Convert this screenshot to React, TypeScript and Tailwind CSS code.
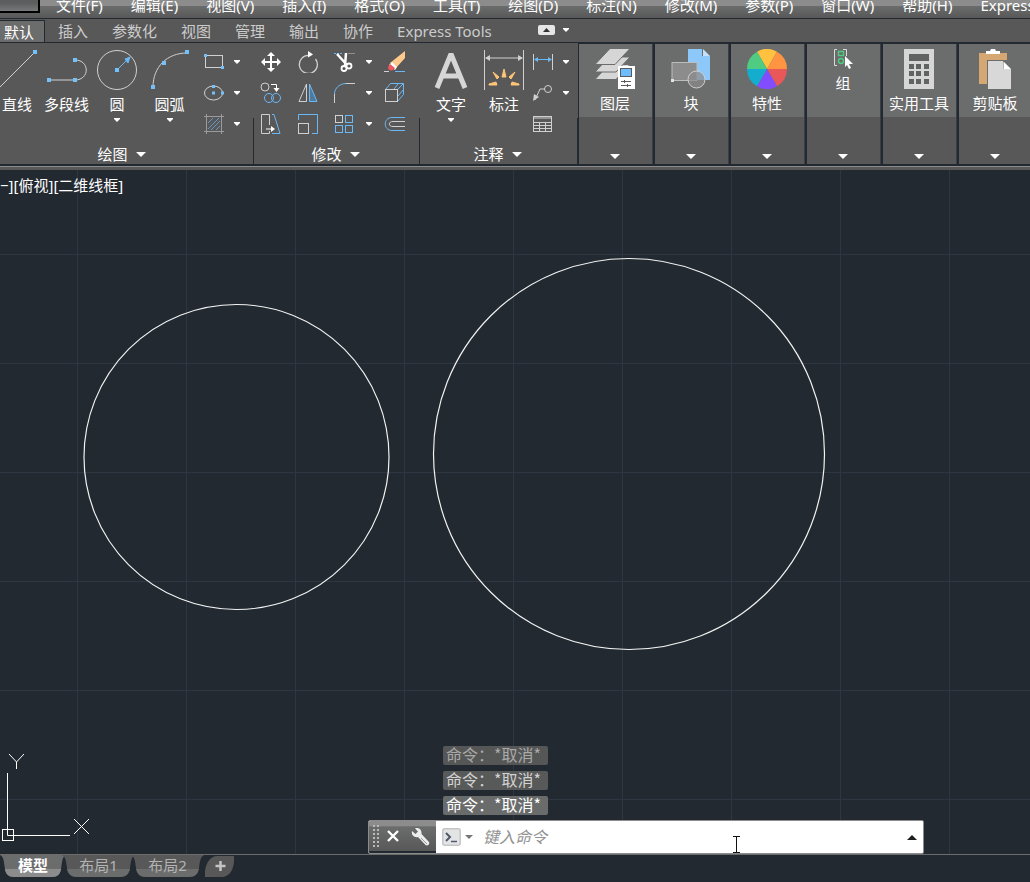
import { useState } from "react";
import type { ReactNode } from "react";
import clsx from "clsx";

const BLUE = "#6cb8f5";
const LINE = "#cfd0cf";

const menus = [
  "文件(F)", "编辑(E)", "视图(V)", "插入(I)", "格式(O)", "工具(T)", "绘图(D)",
  "标注(N)", "修改(M)", "参数(P)", "窗口(W)", "帮助(H)", "Express",
];

const ribbonTabs = ["默认", "插入", "参数化", "视图", "管理", "输出", "协作", "Express Tools"];

const history = [
  { text: "命令：*取消*", style: "bg-[#555656] text-[#a9a9a9]" },
  { text: "命令：*取消*", style: "bg-[#585959] text-[#d2d2d2]" },
  { text: "命令：*取消*", style: "bg-[#6a6c6b] text-white" },
];

const Caret = ({ big = false }: { big?: boolean }) =>
  big ? (
    <svg width="10" height="5" viewBox="0 0 10 5" className="shrink-0"><path d="M0 0h10L5 5z" fill="#fff" /></svg>
  ) : (
    <svg width="6" height="4" viewBox="0 0 6 4" className="shrink-0"><path d="M0 0h6v1L3 4 0 1z" fill="#fff" /></svg>
  );

const Icon = ({ w = 22, h = 22, children }: { w?: number; h?: number; children: ReactNode }) => (
  <svg width={w} height={h} viewBox={`0 0 ${w} ${h}`} fill="none" stroke={LINE} className="shrink-0">
    {children}
  </svg>
);

const Dot = ({ x, y, s = 4 }: { x: number; y: number; s?: number }) => (
  <rect x={x - s / 2} y={y - s / 2} width={s} height={s} fill="#74c0fb" stroke="none" />
);

/* ---------- large tool icons ---------- */

const LineIcon = () => (
  <svg width="34" height="40" viewBox="0 0 34 40" fill="none" stroke={LINE} className="shrink-0 overflow-visible">
    <path d="M0 37 35 2" />
    <Dot x={35} y={2} />
  </svg>
);

const PolylineIcon = () => (
  <Icon w={40} h={40}>
    <path d="M2 30h26c15 0 15-20 0-20" />
    <Dot x={2} y={30} />
    <Dot x={28} y={30} />
    <Dot x={28} y={10} />
  </Icon>
);

const CircleIcon = () => (
  <Icon w={40} h={40}>
    <circle cx="20" cy="20" r="19.5" />
    <path d="M20 20 31 9" stroke={BLUE} />
    <path d="M33 7 28 9l3 4z" fill={BLUE} stroke={BLUE} />
    <Dot x={20} y={20} />
  </Icon>
);

const ArcIcon = () => (
  <Icon w={40} h={40}>
    <path d="M3 37C3 17 17 3 37 3" />
    <Dot x={3} y={37} />
    <Dot x={14} y={13} />
    <Dot x={37} y={2} />
  </Icon>
);

const TextIcon = () => (
  <Icon w={34} h={40}>
    <path d="M3 38 17 4 31 38M8 26h18" stroke="#d6d6d6" strokeWidth="5" strokeLinejoin="bevel" />
  </Icon>
);

const DimensionIcon = () => (
  <Icon w={40} h={40}>
    <path d="M.5 0v40M39.500 0v40M2 8h36" />
    <path d="M1 8l5-3v6zM39 8l-5-3v6z" fill={LINE} stroke="none" />
    <path
      d="M20 19l2 8h-4zM9 22l6 5-2 2zM31 22l-6 5 2 2zM5 34l7-2 1 3H5zM35 34l-7-2-1 3h8z"
      fill="#ffc477"
      stroke="#ffc477"
    />
  </Icon>
);

/* ---------- small tool icons ---------- */

const RectIcon = () => (
  <Icon w={20}>
    <rect x="1.500" y="4.500" width="17" height="12" />
    <Dot x={1.5} y={4.5} s={3} />
    <Dot x={18.5} y={16.5} s={3} />
  </Icon>
);

const EllipseIcon = () => (
  <Icon w={20}>
    <ellipse cx="9.500" cy="11" rx="9" ry="7" />
    <Dot x={9.5} y={4.5} s={3} />
    <Dot x={9.5} y={11} s={3} />
    <Dot x={18.500} y={11} s={3} />
  </Icon>
);

const HatchIcon = () => (
  <Icon w={20}>
    <path d="M4 10l5-5M4 16 15 5M7 17l9-9M12 17l4-4" stroke="#6699c4" />
    <path d="M0 3.500h20M0 18.500h20M2.500 1v20M17.500 1v20" stroke="#9a9b9a" />
  </Icon>
);

const MoveIcon = () => (
  <Icon>
    <path d="M11 3v16M3 11h16" stroke="#fff" strokeWidth="2" />
    <path d="M11 1l4 4H7zM11 21l4-4H7zM1 11l4-4v8zM21 11l-4-4v8z" fill="#fff" stroke="none" />
  </Icon>
);

const RotateIcon = () => (
  <Icon>
    <path d="M12 3.500A9 9 0 1 0 18.500 7" strokeWidth="1.300" transform="translate(0 1)" />
    <path d="M11 0l5 3.500-5 3z" fill="#fff" stroke="none" />
  </Icon>
);

const TrimIcon = () => (
  <Icon>
    <path d="M0 2.500h9" stroke={BLUE} strokeDasharray="2 1" />
    <path d="M14 2.500h7" stroke="#8d8e8d" />
    <path d="M3 3l10 11M12 2l-1 13" stroke="#fff" strokeWidth="2.500" />
    <circle cx="10" cy="17.500" r="2.500" stroke="#fff" strokeWidth="1.800" />
    <circle cx="15" cy="15" r="2.500" stroke="#fff" strokeWidth="1.800" />
  </Icon>
);

const EraseIcon = () => (
  <Icon>
    <path d="M21 0v7L12 17 6 12z" fill="#ffca8b" stroke="none" />
    <path d="M8 11l5 5-2 3-6-5z" fill="#fff" stroke="none" />
    <path d="M6 13l5 4c-3 4-7 3-7-1z" fill="#ee5960" stroke="none" />
    <path d="M0 20.500h5" />
    <path d="M11 20.500h10" stroke={BLUE} />
  </Icon>
);

const CopyIcon = () => (
  <Icon>
    <circle cx="5" cy="5" r="4" />
    <path d="M11 2.500h5.500V7" stroke="#fff" />
    <path d="M13.500 6h6l-3 4z" fill="#fff" stroke="none" />
    <circle cx="9" cy="16" r="4.500" stroke={BLUE} />
    <circle cx="16" cy="16" r="4.500" stroke={BLUE} />
  </Icon>
);

const MirrorIcon = () => (
  <Icon>
    <path d="M9.500 2v17.500H2z" />
    <path d="M12.500 2v17.500H20z" stroke={BLUE} fill="#4d7ba0" />
  </Icon>
);

const FilletIcon = () => (
  <Icon>
    <path d="M.5 12C.5 6 6 1.500 12 1.500" stroke={BLUE} />
    <path d="M.5 12v9M12 1.500h9" />
  </Icon>
);

const BoxIcon = () => (
  <Icon>
    <path d="M1.500 7.500l5-6h13v11l-6 7M13.500 7.500l6-6M10 7l4-5M14 14l5-6" stroke={BLUE} />
    <rect x="1.500" y="7.500" width="12" height="12" />
  </Icon>
);

const StretchIcon = () => (
  <Icon>
    <path d="M12 1.500h2l6 19H12" stroke={BLUE} />
    <path d="M9.500 12V1.500h-8v19h8V18" />
    <path d="M6 16h6" stroke="#fff" />
    <path d="M11 13l4 3-4 3z" fill="#fff" stroke="none" />
  </Icon>
);

const ScaleIcon = () => (
  <Icon>
    <path d="M1.500 7V1.500h19v19H15" stroke={BLUE} />
    <rect x="1.500" y="10.500" width="10" height="10" />
  </Icon>
);

const ArrayIcon = () => (
  <Icon>
    <rect x="1.500" y="2.500" width="7" height="7" />
    <rect x="11.500" y="2.500" width="7" height="7" stroke={BLUE} />
    <rect x="1.500" y="12.500" width="7" height="7" stroke={BLUE} />
    <rect x="11.500" y="12.500" width="7" height="7" stroke={BLUE} />
  </Icon>
);

const OffsetIcon = () => (
  <Icon>
    <path d="M21 4.500H8c-9 0-9 13 0 13h13" stroke={BLUE} />
    <path d="M21 8.500H9c-5 0-5 5 0 5h12" />
  </Icon>
);

const LinearDimIcon = () => (
  <Icon w={20}>
    <path d="M.5 3v16M19.500 3v16" />
    <path d="M2 8.500h16" stroke={BLUE} />
    <path d="M1 8.500l4-2.500v5zM19 8.500 15 6v5z" fill={BLUE} stroke="none" />
  </Icon>
);

const LeaderIcon = () => (
  <Icon w={20}>
    <path d="M2 18 7 7h5" />
    <circle cx="15" cy="7" r="3.500" />
    <path d="M0 19l1-7 5 3z" fill={LINE} stroke="none" />
  </Icon>
);

const TableIcon = () => (
  <Icon w={20}>
    <rect x=".5" y="3.500" width="18" height="15" />
    <path d="M1 5h18M1 9.500h18M1 12.500h18M1 15.500h18M6.500 9v10M12.500 9v10" />
  </Icon>
);

/* ---------- collapsed panel icons ---------- */

const LayersIcon = () => (
  <Icon w={40} h={40}>
    <g fill="#d6d6d6" stroke="#6b6c6c">
      <path d="M0 30.500 14 15.500h21L21 30.500z" />
      <path d="M0 23 14 8h21L21 23z" />
      <path d="M0 15.500 15-.5h20l-15 16z" />
    </g>
    <rect x="23" y="17" width="17" height="23" fill="#fff" stroke="none" />
    <rect x="25.500" y="19.500" width="11" height="8" fill="#6cbcff" stroke="#5a5a5a" />
    <path d="M26 32.500h10M26 36.500h10M29.500 31v3M32.500 35v3" stroke="#5a5a5a" />
  </Icon>
);

const BlockIcon = () => (
  <Icon w={40} h={40}>
    <path d="M17 0h14v7h8v24H17z" fill="#8dc8fa" stroke="none" />
    <path d="M32 0l7 7h-7z" fill="#c4e2fb" stroke="none" />
    <rect x="1" y="13.500" width="25" height="18" fill="#8b8c8b" stroke="#bcbdbc" />
    <circle cx="25.500" cy="30.500" r="8.500" fill="#8b8c8b" fillOpacity=".7" />
    <rect x="0" y="30" width="3" height="3" fill="#e2e2e2" stroke="none" />
  </Icon>
);

const PropertiesIcon = () => (
  <Icon w={40} h={40}>
    <g stroke="none">
      <path d="M20 20 10 2.680A20 20 0 0 1 30 2.680z" fill="#ffc13f" />
      <path d="M20 20 30 2.680A20 20 0 0 1 40 20z" fill="#ff9442" />
      <path d="M20 20h20a20 20 0 0 1-10 17.320z" fill="#e85858" />
      <path d="M20 20l10 17.320a20 20 0 0 1-20 0z" fill="#824dff" />
      <path d="M20 20 10 37.320A20 20 0 0 1 0 20z" fill="#14adcd" />
      <path d="M20 20H0A20 20 0 0 1 10 2.680z" fill="#4fcb82" />
    </g>
  </Icon>
);

const GroupIcon = () => (
  <Icon w={20} h={20}>
    <path d="M4 .5H1.500v16H4M10 .5h3.500V7" stroke="#dcdcdc" />
    <rect x="5.500" y="2.500" width="5" height="4" stroke="#4fcb82" strokeWidth="1.400" />
    <circle cx="8" cy="12" r="2.500" stroke="#4fcb82" strokeWidth="1.400" />
    <path d="M12 7v11l2-2 2 4 2-1-2-4h4z" fill="#fff" stroke="none" />
  </Icon>
);

const CalculatorIcon = () => (
  <Icon w={40} h={40}>
    <rect x="5" y="0" width="30" height="40" fill="#d6d6d6" stroke="none" />
    <rect x="10" y="5" width="20" height="7" fill="#616262" stroke="none" />
    {[15, 22, 30].map((y) =>
      [10, 17, 25].map((x) => <rect key={`${x}-${y}`} x={x} y={y} width="5" height="5" fill="#616262" stroke="none" />)
    )}
  </Icon>
);

const ClipboardIcon = () => (
  <Icon w={40} h={40}>
    <path d="M4 4h28v31H4z" fill="#d5a873" stroke="none" />
    <path d="M12 11h20v24H12z" fill="#6b6c6c" stroke="none" />
    <path d="M13 12h15v8h8v20H13z" fill="#d8d8d8" stroke="none" />
    <path d="M28.500 12.500 36 20h-7.500z" fill="#fff" stroke="none" />
    <path d="M11 5V2h4l1-2h4l1 2h4v3z" fill="#fff" stroke="none" />
  </Icon>
);

const collapsed = [
  { label: "图层", icon: <LayersIcon /> },
  { label: "块", icon: <BlockIcon /> },
  { label: "特性", icon: <PropertiesIcon /> },
  { label: "组", icon: <GroupIcon /> },
  { label: "实用工具", icon: <CalculatorIcon /> },
  { label: "剪贴板", icon: <ClipboardIcon /> },
];

/* ---------- ribbon pieces ---------- */

const BigTool = ({ label, icon, caret, className }: { label: string; icon: ReactNode; caret?: boolean; className: string }) => (
  <button type="button" className={clsx("flex shrink-0 flex-col items-center pt-[7px]", className)}>
    {icon}
    <span className="mt-1 mb-1 whitespace-nowrap leading-5">{label}</span>
    {caret && <Caret />}
  </button>
);

const SmallTool = ({ label, icon, caret }: { label: string; icon: ReactNode; caret?: boolean }) => (
  <button type="button" aria-label={label} className="flex items-center gap-2.5">
    {icon}
    {caret && <Caret />}
  </button>
);

const Panel = ({ title, titleClass, children }: { title: string; titleClass?: string; children: ReactNode }) => (
  <section className="flex shrink-0">
    <div className="flex flex-col">
      <div className="flex h-[101px]">{children}</div>
      <button type="button" className={clsx("flex h-5 items-center justify-center gap-2 leading-5", titleClass)}>
        {title}
        <Caret big />
      </button>
    </div>
    <div className="h-[46px] w-px self-end bg-[#222931]" />
  </section>
);

const Ribbon = () => (
  <div className="border-b border-[#8b8c8b] bg-[#585858]">
    <div className="flex h-[123px] overflow-hidden border-b-2 border-[#222931]">
      <Panel title="绘图" titleClass="pr-2.5">
        <BigTool label="直线" icon={<LineIcon />} className="w-[34px]" />
        <BigTool label="多段线" icon={<PolylineIcon />} className="w-[65px]" />
        <BigTool label="圆" icon={<CircleIcon />} caret className="w-9" />
        <BigTool label="圆弧" icon={<ArcIcon />} caret className="w-[69px]" />
        <div className="flex w-[49px] flex-col gap-[9px] pt-2">
          <SmallTool label="矩形" icon={<RectIcon />} caret />
          <SmallTool label="椭圆" icon={<EllipseIcon />} caret />
          <SmallTool label="图案填充" icon={<HatchIcon />} caret />
        </div>
      </Panel>
      <Panel title="修改" titleClass="pr-0.5">
        <div className="grid w-[165px] grid-cols-[37px_37px_50px_22px] content-start gap-y-[9px] pt-2 pl-1.5">
          <SmallTool label="移动" icon={<MoveIcon />} />
          <SmallTool label="旋转" icon={<RotateIcon />} />
          <SmallTool label="修剪" icon={<TrimIcon />} caret />
          <SmallTool label="删除" icon={<EraseIcon />} />
          <SmallTool label="复制" icon={<CopyIcon />} />
          <SmallTool label="镜像" icon={<MirrorIcon />} />
          <SmallTool label="圆角" icon={<FilletIcon />} caret />
          <SmallTool label="分解" icon={<BoxIcon />} />
          <SmallTool label="拉伸" icon={<StretchIcon />} />
          <SmallTool label="缩放" icon={<ScaleIcon />} />
          <SmallTool label="阵列" icon={<ArrayIcon />} caret />
          <SmallTool label="偏移" icon={<OffsetIcon />} />
        </div>
      </Panel>
      <Panel title="注释" titleClass="pr-0.5">
        <BigTool label="文字" icon={<TextIcon />} caret className="w-[62px]" />
        <BigTool label="标注" icon={<DimensionIcon />} className="w-11" />
        <div className="flex w-[51px] flex-col gap-[9px] pt-2 pl-[7px]">
          <SmallTool label="线性" icon={<LinearDimIcon />} caret />
          <SmallTool label="引线" icon={<LeaderIcon />} caret />
          <SmallTool label="表格" icon={<TableIcon />} />
        </div>
      </Panel>
      <div className="flex flex-1 gap-0.5 bg-[#222931] pt-px pl-px">
        {collapsed.map((p) => (
          <button
            key={p.label}
            type="button"
            className="flex w-[74px] shrink-0 flex-col border-r border-[#3a4047] bg-[#585858]"
          >
            <span className="flex h-[73px] w-full flex-col items-center bg-[#6b6c6c] pt-[5px] pr-px">
              {p.icon}
              <span className="mt-1 whitespace-nowrap leading-5">{p.label}</span>
            </span>
            <span className="mt-[37px] flex w-full justify-center pr-px">
              <Caret big />
            </span>
          </button>
        ))}
      </div>
    </div>
  </div>
);

/* ---------- drawing area ---------- */

const Drawing = () => (
  <svg className="absolute inset-0 h-full w-full">
    <defs>
      <pattern id="grid" x="77" y="84" width="109" height="109" patternUnits="userSpaceOnUse">
        <path d="M.5 0v109M0 .5h109" stroke="#2e3641" fill="none" />
      </pattern>
    </defs>
    <rect width="100%" height="100%" fill="url(#grid)" />
    <circle cx="236.500" cy="287" r="152.500" fill="none" stroke="#f2f2f2" strokeWidth="1.200" />
    <circle cx="629" cy="284" r="195.500" fill="none" stroke="#f2f2f2" strokeWidth="1.200" />
  </svg>
);

const UcsIcon = () => (
  <svg width="100" height="110" viewBox="0 0 100 110" className="absolute bottom-0 left-0" fill="none" stroke="#fff">
    <path d="M7.500 29v62.500H70" />
    <rect x="2.500" y="85.500" width="11" height="11" />
    <path d="M9 10l7.500 8L24 10M16.500 18v7M74 75l15 15M89 75 74 90" />
  </svg>
);

const CommandLine = () => {
  const [command, setCommand] = useState("");
  return (
    <div className="absolute bottom-0 left-[368px] flex h-[34px] w-[556px] overflow-hidden rounded-xs border border-[#8b8c8b] bg-white">
      <div className="flex w-[67px] shrink-0 items-center gap-2 border-b-2 border-[#222931] bg-linear-to-b from-[#8b8c8b] from-15% via-[#6b6c6c] via-20% to-[#585858] pl-1">
        <svg width="6" height="22" viewBox="0 0 6 22" className="shrink-0">
          <path d="M1 0v22M5 0v22" stroke="#b9bab9" strokeWidth="2" strokeDasharray="2 2" />
        </svg>
        <button type="button" aria-label="关闭">
          <svg width="12" height="12" viewBox="0 0 12 12" stroke="#fff" strokeWidth="2.400"><path d="M1 1l10 10M11 1 1 11" /></svg>
        </button>
        <button type="button" aria-label="自定义" className="ml-1">
          <svg width="19" height="19" viewBox="0 0 19 19">
            <path d="M4 1.500 7 4.500 4.500 7 1 4C0 8 3 11 7 10l7.500 8c2.500 1.500 4.500-1 3.500-3L10.500 7C11 3 8 0 4 1.500z" fill="#ececec" />
            <path d="M10 11l6 6" stroke="#9a9b9a" />
          </svg>
        </button>
      </div>
      <button type="button" aria-label="最近使用的命令" className="flex shrink-0 items-center gap-1 pl-1.5">
        <svg width="19" height="18" viewBox="0 0 19 18">
          <rect x=".8" y=".8" width="17.400" height="16.400" rx="2" fill="#e3e4e6" stroke="#c5c5c5" strokeWidth="1.500" />
          <path d="M4 5l4 4-4 4" fill="none" stroke="#4f5968" strokeWidth="2" />
          <path d="M9 13.500h6" stroke="#4f5968" strokeWidth="1.500" />
        </svg>
        <svg width="8" height="4" viewBox="0 0 8 4"><path d="M0 0h8L4 4z" fill="#777" /></svg>
      </button>
      <input
        aria-label="命令"
        value={command}
        onChange={(e) => setCommand(e.target.value)}
        placeholder="键入命令"
        className="min-w-0 flex-1 pl-2.5 text-base italic text-[#333] outline-none placeholder:text-[#929292]"
      />
      <button type="button" aria-label="历史记录" className="px-1.5">
        <svg width="10" height="5" viewBox="0 0 10 5"><path d="M0 5h10L5 0z" fill="#1d1d1d" /></svg>
      </button>
    </div>
  );
};

const LayoutTab = ({ label, active, onClick }: { label: string; active: boolean; onClick: () => void }) => (
  <button
    type="button"
    onClick={onClick}
    className={clsx("relative h-[22px] pb-0.5 leading-5", active ? "w-[60px] font-bold text-white" : "w-[67px] text-[#b3b3b3]")}
  >
    <svg viewBox="0 0 66 22" preserveAspectRatio="none" className="absolute inset-0 h-full w-full overflow-visible">
      <path d="M-3 0h72c-4 2-4 7-5 13-1 6-4 9-10 9H12C6 22 3 19 2 13 1 7 1 2-3 0z" fill={active ? "#6b6c6c" : "#585858"} />
      <path d="M2 14h62c-1 5-4 8-10 8H12c-6 0-9-3-10-8z" fill={active ? "#8b8c8b" : "#6b6c6c"} />
    </svg>
    <span className="relative">{label}</span>
  </button>
);

export default function App() {
  const [tab, setTab] = useState("默认");
  const [layout, setLayout] = useState("模型");

  return (
    <div className="flex min-h-screen flex-col overflow-hidden bg-[#222931] font-['Noto_Sans','Noto_Sans_CJK_SC',sans-serif] text-[15px] text-white">
      <nav className="flex h-[19px] overflow-hidden border-b border-[#222931] bg-linear-to-b from-[#8b8c8b] from-33% via-[#6b6c6c] via-33% to-[#585858]">
        <div className="h-[13px] w-10 shrink-0 border-r-2 border-b-2 border-black bg-linear-to-b from-[#5c5d5d] from-25% to-[#77787a]" />
        <div className="flex shrink-0 items-start gap-7 pl-4">
          {menus.map((m) => (
            <button key={m} type="button" className="-mt-[5px] whitespace-nowrap leading-5">{m}</button>
          ))}
        </div>
      </nav>

      <div className="flex h-6 items-end border-b border-[#222931] bg-[#585858]">
        {ribbonTabs.map((t) => (
          <button
            key={t}
            type="button"
            onClick={() => setTab(t)}
            className={clsx(
              "h-[22px] whitespace-nowrap leading-5",
              t === tab ? "mr-px border-t border-r border-[#222931] bg-[#6b6c6c] pr-2.5 pl-1 text-white" : "px-3 text-[#cccccc]"
            )}
          >
            {t}
          </button>
        ))}
        <button type="button" aria-label="最小化面板" className="ml-[34px] flex h-6 items-center gap-2">
          <svg width="17" height="10" viewBox="0 0 17 10">
            <rect width="17" height="10" rx="2" fill="#e6e6e6" />
            <path d="M5 7h7L8.500 3z" fill="#333" />
          </svg>
          <Caret />
        </button>
      </div>

      <Ribbon />

      <main className="relative min-h-[684px] flex-1 overflow-hidden border-t-3 border-[#585858]">
        <Drawing />
        <div className="absolute top-[5px] left-0 whitespace-nowrap leading-5">−][俯视][二维线框]</div>
        <UcsIcon />
        <div className="absolute bottom-[39px] left-[443px] flex flex-col gap-1.5 font-['Noto_Sans_CJK_SC',sans-serif] text-base">
          {history.map((h, i) => (
            <div key={i} className={clsx("h-[19px] w-[105px] rounded-xs pl-[3px] whitespace-nowrap leading-4", h.style)}>
              {h.text}
            </div>
          ))}
        </div>
        <CommandLine />
        <svg width="7" height="17" viewBox="0 0 7 17" className="absolute bottom-px left-[733px]" stroke="#111">
          <path d="M0 .5h7M3.500 0v17M0 16.500h7" />
        </svg>
      </main>

      <footer className="flex h-7 items-start gap-0.5 border-t border-[#6b6c6c] pl-[3px]">
        {["模型", "布局1", "布局2"].map((l) => (
          <LayoutTab key={l} label={l} active={l === layout} onClick={() => setLayout(l)} />
        ))}
        <button type="button" aria-label="新建布局" className="ml-0.5">
          <svg width="29" height="22" viewBox="0 0 29 22">
            <path d="M11 1h18v6c-1 9-5 14-11 15H0v-6C1 8 5 2 11 1z" fill="#585858" />
            <path d="M15.500 6v10M10.500 11h10" stroke="#c4c4c4" strokeWidth="2.500" />
          </svg>
        </button>
      </footer>
    </div>
  );
}
